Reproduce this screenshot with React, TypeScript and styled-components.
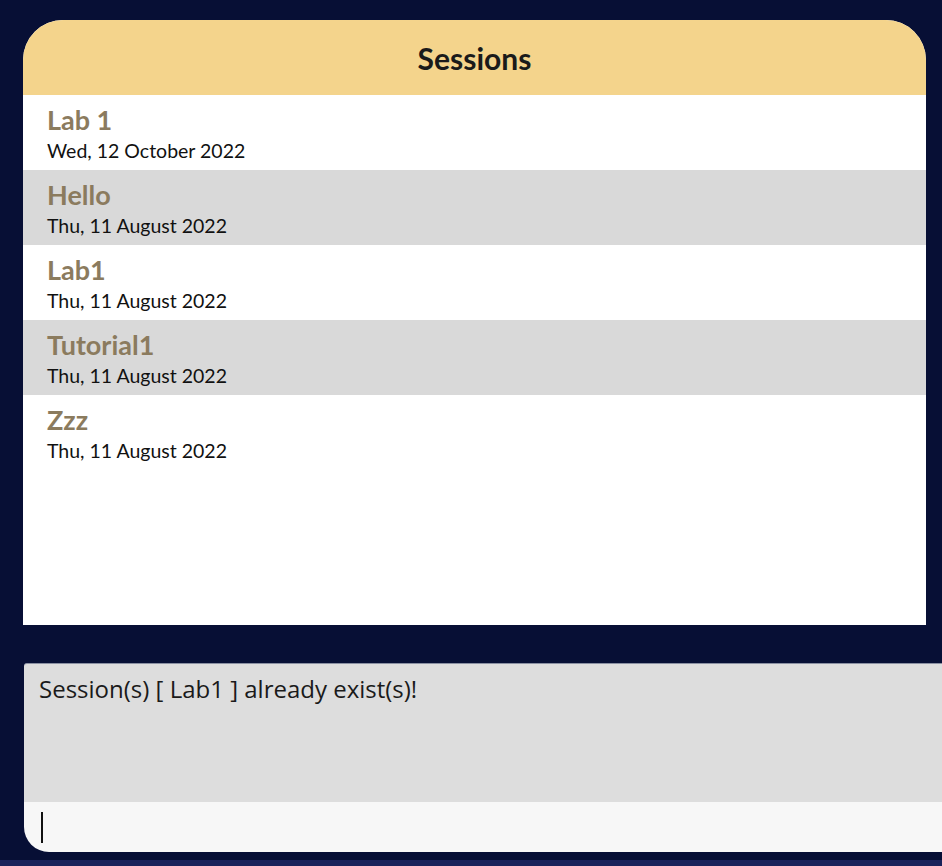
import React from "react";
import styled, { createGlobalStyle } from "styled-components";

const Global = createGlobalStyle`
  html, body { margin: 0; padding: 0; background: #070f35; }
  body { width: 942px; height: 866px; overflow: hidden; }
`;

const Page = styled.div`
  width: 942px;
  height: 866px;
  background: #070f35;
  display: flex;
  flex-direction: column;
  overflow: hidden;
`;

const Main = styled.div`
  flex: 1;
  display: flex;
  flex-direction: column;
  padding: 20px 0 0 23px;
`;

const Card = styled.section`
  width: 903px;
  height: 605px;
  background: #ffffff;
  border-radius: 40px 40px 0 0;
  display: flex;
  flex-direction: column;
  overflow: hidden;
`;

const Header = styled.div`
  height: 75px;
  background: #f4d48c;
  display: flex;
  align-items: center;
  justify-content: center;
  font-family: Lato, sans-serif;
  font-weight: 700;
  font-size: 30px;
  color: #1a1a1a;
`;

const Row = styled.div<{ $shaded: boolean }>`
  height: 75px;
  box-sizing: border-box;
  background: ${(p) => (p.$shaded ? "#d9d9d9" : "#ffffff")};
  padding: 9px 0 0 24px;
  font-family: Lato, sans-serif;
  display: flex;
  flex-direction: column;
`;

const Title = styled.div`
  font-weight: 700;
  font-size: 27px;
  line-height: 31px;
  color: #8b7b5e;
`;

const DateText = styled.div`
  margin-top: 2px;
  font-size: 19.5px;
  line-height: 28px;
  color: #111111;
`;

const Console = styled.div`
  margin-top: 38px;
  margin-left: 1px;
  width: 940px;
  display: flex;
  flex-direction: column;
`;

const Result = styled.div`
  height: 139px;
  box-sizing: border-box;
  background: #dddddd;
  border-top: 1px solid #8a90a2;
  border-radius: 3px 0 0 0;
  padding: 9px 0 0 15px;
  font-family: "Open Sans", sans-serif;
  font-size: 24px;
  line-height: 32px;
  color: #1a1a1a;
`;

const Input = styled.div`
  height: 50px;
  background: #f7f7f7;
  border-radius: 0 0 0 25px;
  display: flex;
  align-items: center;
  padding-left: 17px;
`;

const Caret = styled.div`
  width: 1.5px;
  height: 31px;
  background: #111111;
`;

const Footer = styled.div`
  height: 6px;
  background: #19225a;
`;

const sessions = [
  { name: "Lab 1", date: "Wed, 12 October 2022" },
  { name: "Hello", date: "Thu, 11 August 2022" },
  { name: "Lab1", date: "Thu, 11 August 2022" },
  { name: "Tutorial1", date: "Thu, 11 August 2022" },
  { name: "Zzz", date: "Thu, 11 August 2022" },
];

export default function App() {
  return (
    <Page>
      <Global />
      <Main>
        <Card>
          <Header>Sessions</Header>
          {sessions.map((s, i) => (
            <Row key={i} $shaded={i % 2 === 1}>
              <Title>{s.name}</Title>
              <DateText>{s.date}</DateText>
            </Row>
          ))}
        </Card>
        <Console>
          <Result>Session(s) [ Lab1 ] already exist(s)!</Result>
          <Input>
            <Caret />
          </Input>
        </Console>
      </Main>
      <Footer />
    </Page>
  );
}
